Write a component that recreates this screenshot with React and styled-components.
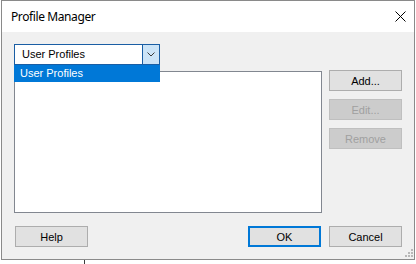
import styled, { createGlobalStyle } from "styled-components";

const GlobalStyle = createGlobalStyle`
    html, body {
        margin:0;
        padding:0;
        background:#fff;
    }
    body{
        font-family:"Liberation Sans", Arial, sans-serif;
        font-size:11px;
        color:#000;
    }
`;

const Page = styled.div`
        position:relative;
        width:416px;
        height:264px;
        padding-left:1px;
        box-sizing:border-box;
        overflow:hidden;

        &::after{
            content:'';
            position:absolute;
            left:84px;
            top:260px;
            width:1px;
            height:4px;
            background:#3c3c3c;
        }
    `;
const Window = styled.div`
        position:relative;
        width:414px;
        height:260px;
        border:1px solid #8a8a8a;
        box-sizing:border-box;
        display:flex;
        flex-direction:column;
    `;
const TitleBar = styled.div`
        height:31px;
        background:#fff;
        display:flex;
        align-items:center;
        justify-content:space-between;
        padding-left:9px;
        padding-right:6px;
        flex-shrink:0;
    `;
const Title = styled.span`
        font-family:"Noto Sans", "Liberation Sans", sans-serif;
        font-size:12px;
        letter-spacing:-0.4px;
    `;
const CloseBox = styled.div`
        width:16px;
        height:16px;
        display:flex;
        align-items:center;
        justify-content:center;
    `;
const Client = styled.div`
        flex:1;
        background:#f0f0f0;
        padding-top:12px;
        display:flex;
        flex-direction:column;
    `;
const MainRow = styled.div`
        display:flex;
        padding-left:12px;
    `;
const LeftCol = styled.div`
        display:flex;
        flex-direction:column;
        width:308px;
    `;
const Combo = styled.div`
        position:relative;
        width:146px;
        height:21px;
        box-sizing:border-box;
        border:1px solid #1a5ea4;
        background:#fff;
        display:flex;
    `;
const ComboText = styled.div`
        flex:1;
        padding-left:7px;
        line-height:19px;
    `;
const DropButton = styled.div`
        width:16px;
        background:#cce4f7;
        border-left:1px solid #1a5ea4;
        display:flex;
        align-items:center;
        justify-content:center;
    `;
const DropList = styled.div`
        position:absolute;
        left:-1px;
        top:20px;
        width:146px;
        height:17px;
        background:#0078d7;
        color:#fff;
        padding-left:6px;
        box-sizing:border-box;
        line-height:17px;
        z-index:2;
    `;
const ListBox = styled.div`
        margin-top:6px;
        height:142px;
        box-sizing:border-box;
        border:1px solid #828790;
        background:#fff;
    `;
const RightCol = styled.div`
        display:flex;
        flex-direction:column;
        gap:8px;
        margin-left:7px;
        padding-top:26px;
    `;
const Button = styled.div`
        width:73px;
        height:21px;
        box-sizing:border-box;
        display:flex;
        align-items:center;
        justify-content:center;
        background:${p => p.disabled ? '#cccccc' : '#e1e1e1'};
        border:${p => p.focused ? '2px solid #0078d7' : p.disabled ? '1px solid #bfbfbf' : '1px solid #adadad'};
        color:${p => p.disabled ? '#a0a0a0' : '#000'};
    `;
const BottomRow = styled.div`
        display:flex;
        align-items:center;
        margin-top:13px;
        padding-left:13px;
        padding-right:12px;
    `;
const Spacer = styled.div`
        flex:1;
    `;
const BottomButtons = styled.div`
        display:flex;
        gap:8px;
    `;
const Grip = styled.svg`
        position:absolute;
        right:1px;
        bottom:1px;
    `;

export default function App() {
    const gripDots = [[9, 0], [6, 3], [9, 3], [3, 6], [6, 6], [9, 6]];
    return (
        <>
            <GlobalStyle />
            <Page>
                <Window>
                    <TitleBar>
                        <Title>Profile Manager</Title>
                        <CloseBox>
                            <svg width="11" height="11" viewBox="0 0 11 11">
                                <path d="M0.5 0.5 L10.5 10.5 M10.5 0.5 L0.5 10.5" stroke="#000" strokeWidth="1" fill="none" />
                            </svg>
                        </CloseBox>
                    </TitleBar>
                    <Client>
                        <MainRow>
                            <LeftCol>
                                <Combo>
                                    <ComboText>User Profiles</ComboText>
                                    <DropButton>
                                        <svg width="8" height="5" viewBox="0 0 8 5">
                                            <path d="M0.5 0.5 L4 4 L7.5 0.5" stroke="#3a3a3a" strokeWidth="1" fill="none" />
                                        </svg>
                                    </DropButton>
                                    <DropList>User Profiles</DropList>
                                </Combo>
                                <ListBox />
                            </LeftCol>
                            <RightCol>
                                <Button>Add...</Button>
                                <Button disabled>Edit...</Button>
                                <Button disabled>Remove</Button>
                            </RightCol>
                        </MainRow>
                        <BottomRow>
                            <Button>Help</Button>
                            <Spacer />
                            <BottomButtons>
                                <Button focused>OK</Button>
                                <Button>Cancel</Button>
                            </BottomButtons>
                        </BottomRow>
                    </Client>
                    <Grip width="11" height="9" viewBox="0 0 11 9">
                        {gripDots.map(([x, y], i) => <rect key={i} x={x} y={y} width="2" height="2" fill="#b8b8b8" />)}
                    </Grip>
                </Window>
            </Page>
        </>
    );
}
